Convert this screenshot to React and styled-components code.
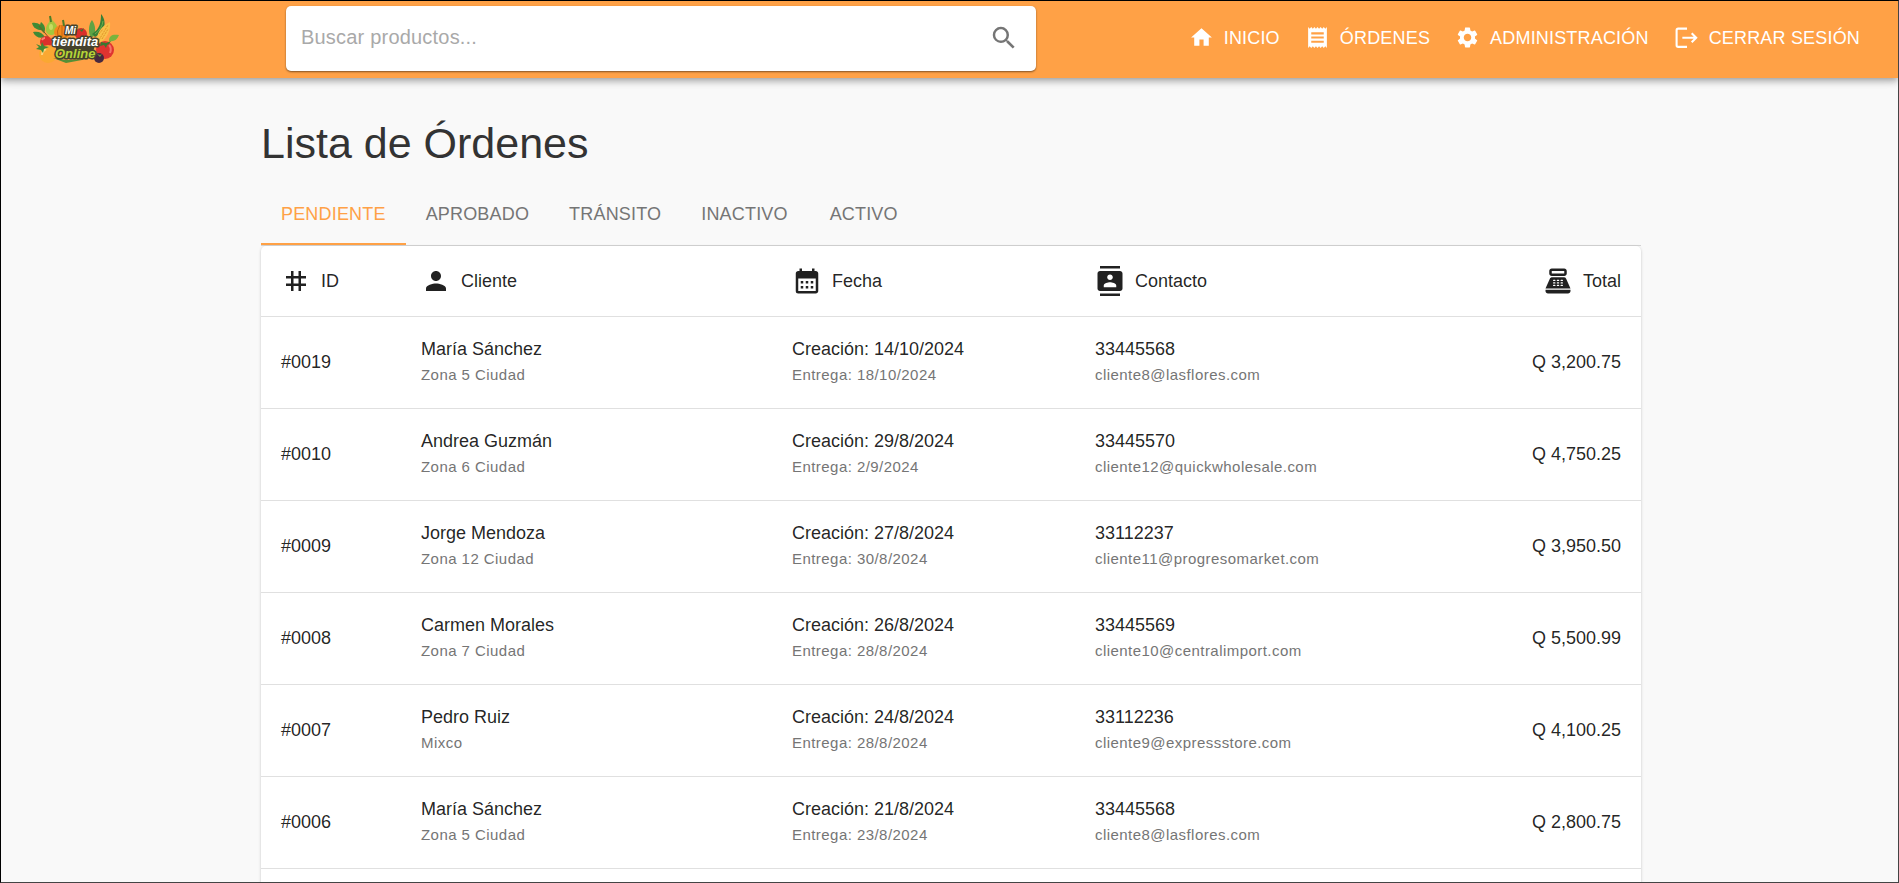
import React, { useState } from "react";
import styled, { createGlobalStyle } from "styled-components";
import {
  MdHome,
  MdReceipt,
  MdSettings,
  MdSearch,
  MdTag,
  MdPerson,
  MdCalendarMonth,
  MdContacts,
  MdPointOfSale,
} from "react-icons/md";

const GlobalStyle = createGlobalStyle`
  *, *::before, *::after { box-sizing: border-box; }
  body {
    margin: 0;
    background: #f9f9f9;
    color: rgba(0, 0, 0, 0.87);
    font-family: "Liberation Sans", Arial, Helvetica, sans-serif;
    font-size: 18px;
  }
  button, input { font: inherit; }
`;

const Page = styled.div`
  height: 100vh;
  overflow: hidden;
  border: 1px solid #000;
  border-right-color: #444;
  border-bottom-color: #444;
`;

const Header = styled.header`
  position: relative;
  display: flex;
  align-items: center;
  padding: 5px 38px 7px 30px;
  background: #ffa146;
  box-shadow: 0 2px 5px -1px rgba(0, 0, 0, 0.2), 0 5px 6px 0 rgba(0, 0, 0, 0.14),
    0 1px 12px 0 rgba(0, 0, 0, 0.12);
`;

const LogoLink = styled.a`
  display: block;
  flex: none;
  width: 88px;
  height: 50px;
  margin-right: 167px;
`;

const SearchForm = styled.form`
  display: flex;
  align-items: center;
  flex: 0 1 750px;
  height: 65px;
  padding: 0 17px 2px 15px;
  border-radius: 5px;
  background: #fff;
  box-shadow: 0 1px 2px rgba(0, 0, 0, 0.5);
`;

const SearchInput = styled.input`
  flex: 1;
  min-width: 0;
  padding: 0;
  border: 0;
  outline: 0;
  background: none;
  font-size: 20px;
  letter-spacing: 0.01em;
  color: rgba(0, 0, 0, 0.87);
  &::placeholder {
    color: #a9a9a9;
    opacity: 1;
  }
`;

const SearchButton = styled.button`
  display: flex;
  padding: 0;
  border: 0;
  background: none;
  color: #757575;
  cursor: pointer;
`;

const Nav = styled.nav`
  display: flex;
  gap: 25px;
  margin-left: auto;
  padding-bottom: 2px;
`;

const NavLink = styled.a`
  display: flex;
  align-items: center;
  gap: 10px;
  color: #fff;
  font-weight: 500;
  letter-spacing: 0.01em;
  line-height: 30px;
  text-decoration: none;
  text-transform: uppercase;
  white-space: nowrap;
`;

const Main = styled.main`
  padding-left: 3px;
`;

const Container = styled.div`
  max-width: 1380px;
  margin: 0 auto;
  padding-top: 39px;
`;

const Title = styled.h1`
  margin: 0 0 15px;
  color: #333;
  font-size: 43px;
  font-weight: 400;
  line-height: 53px;
`;

const Tabs = styled.div`
  display: flex;
  border-bottom: 1px solid #d4d4d4;
`;

const Tab = styled.button`
  min-width: 112px;
  height: 60px;
  padding: 0 20px 2px;
  border: 0;
  background: none;
  box-shadow: ${(p) => (p.$active ? "inset 0 -2px #ffa146" : "none")};
  color: ${(p) => (p.$active ? "#ffa146" : "#757575")};
  letter-spacing: 0.01em;
  text-transform: uppercase;
  cursor: pointer;
`;

const Card = styled.div`
  border-radius: 5px;
  background: #fff;
  box-shadow: 0 1px 3px rgba(0, 0, 0, 0.22);
`;

const Table = styled.table`
  width: 100%;
  table-layout: fixed;
  border-collapse: separate;
  border-spacing: 0;
`;

const Col = styled.col`
  width: ${(p) => p.$width || "auto"};
`;

const HeadCell = styled.th`
  padding: 20px;
  border-bottom: 1px solid #e0e0e0;
  font-weight: 400;
  text-align: left;
`;

const HeadLabel = styled.span`
  display: flex;
  align-items: center;
  justify-content: ${(p) => (p.$end ? "flex-end" : "flex-start")};
  gap: 10px;
  line-height: 30px;
`;

const Cell = styled.td`
  padding: 20px;
  border-bottom: 1px solid #e0e0e0;
  text-align: ${(p) => (p.$end ? "right" : "left")};
`;

const Primary = styled.div`
  line-height: 25px;
`;

const Secondary = styled.div`
  color: #757575;
  font-size: 15px;
  letter-spacing: 0.03em;
  line-height: 26px;
`;

const CardFooter = styled.div`
  height: 92px;
`;

const LogoutIcon = () => (
  <svg width="25" height="25" viewBox="0 0 24 24" fill="none" stroke="currentColor" strokeWidth="2" aria-hidden="true">
    <path d="M12.500 3.500H4Q2.500 3.500 2.500 5V19.500Q2.500 21 4 21H12.500M8 12.300H21M17 8l4.300 4.300L17 16.600" />
  </svg>
);

const LogoWord = styled.text`
  font-family: "Liberation Sans", Arial, sans-serif;
  font-weight: 700;
  font-style: italic;
  font-size: ${(p) => p.$size}px;
  fill: ${(p) => p.$fill};
  stroke: #45422c;
  stroke-width: 3px;
  stroke-linejoin: round;
  paint-order: stroke;
`;

const Logo = () => (
  <svg width="88" height="50" viewBox="0 0 88 50" role="img" aria-label="Mi tiendita Online">
    <g fill="#3f8a35">
      <path d="M1 9c6-1 10 2 12 7C7 17 2 14 1 9z" />
      <path d="M10 8c4 3 5 7 3 11-4-3-5-7-3-11z" />
      <path d="M2 18c5-1 9 0 12 5-5 2-10 0-12-5z" />
    </g>
    <path d="M8 12L19 25" stroke="#735a22" fill="none" />
    <path d="M20 3c1 5 7 6 6 12 0 4-3 6-6 6s-6-3-5-7 4-6 5-11z" fill="#a4c63c" />
    <path d="M19 2l1 6" stroke="#4f7c27" strokeWidth="2" />
    <ellipse cx="20" cy="13" rx="2" ry="3" fill="#c6dc62" />
    <ellipse cx="31" cy="18" rx="8" ry="7" fill="#f28a1c" />
    <path d="M29 11q-4 6-2 12M33 11q4 6 2 12M31 11v12" stroke="#c96411" fill="none" />
    <path d="M32 6l1 6" stroke="#4f7c27" strokeWidth="2" />
    <circle cx="50" cy="20" r="6" fill="#d92f2b" />
    <path d="M47 14l3 2 3-2-2 4z" fill="#3a7831" />
    <path d="M59 22c-2-6-1-12 2-16 4 6 4 12 1 17z" fill="#5ea344" />
    <path d="M61 20C69 15 70 8 70 0c6 7 5 18-6 23z" fill="#388137" />
    <path d="M64 20q7-5 8-13" stroke="#6db04a" fill="none" />
    <path d="M66 28c-1-8 4-16 13-20 1 8-3 16-9 20z" fill="#f9c04a" />
    <path d="M68 26L77 11M71 25l6-10M68 20l4-5" stroke="#df9427" strokeDasharray="2 1" />
    <path d="M78 27c0-6 4-7 10-6-2 5-5 7-10 6z" fill="#78b43d" />
    <circle cx="15" cy="28" r="6" fill="#db302c" />
    <path d="M11 26q1-2 3-2" stroke="#f58378" strokeWidth="2" fill="none" />
    <circle cx="17" cy="40" r="9" fill="#faa832" />
    <path d="M11 41q0-4 4-6" stroke="#ffd47c" strokeWidth="2" fill="none" />
    <path d="M5 30l5 2 1-4 2 4 5 1-5 2-1 4-2-3-5-1 3-2z" fill="#3f8a35" />
    <path d="M22 44l14 2 18-1 9-7 4 4-16 4-16 3z" fill="#568f36" />
    <circle cx="74" cy="36" r="9" fill="#df3430" />
    <path d="M78 31q3 3 1 8" stroke="#f47369" strokeWidth="2" fill="none" />
    <path d="M70 28l5 1 5-2-2 3-2 1-1 3-2-3-4 1z" fill="#3a7831" />
    <circle cx="68" cy="44" r="5" fill="#47283f" />
    <path d="M66 40l3 1 2-1-2 3z" fill="#6c993d" />
    <path d="M24 31h40l-2 7H26z" fill="#45422c" />
    <LogoWord x="34" y="20" $size={10} $fill="#fff">Mi</LogoWord>
    <LogoWord x="21" y="32" $size={13} $fill="#fff">tiendita</LogoWord>
    <LogoWord x="24" y="44" $size={13} $fill="#b4d438">Online</LogoWord>
  </svg>
);

const NAV = [
  { label: "Inicio", icon: MdHome },
  { label: "Órdenes", icon: MdReceipt },
  { label: "Administración", icon: MdSettings },
  { label: "Cerrar sesión", icon: LogoutIcon },
];

const TABS = ["Pendiente", "Aprobado", "Tránsito", "Inactivo", "Activo"];

const COLUMNS = [
  { label: "ID", icon: MdTag, width: "140px" },
  { label: "Cliente", icon: MdPerson, width: "371px" },
  { label: "Fecha", icon: MdCalendarMonth, width: "303px" },
  { label: "Contacto", icon: MdContacts },
  { label: "Total", icon: MdPointOfSale, end: true },
];

const ORDERS = [
  { id: "#0019", name: "María Sánchez", zone: "Zona 5 Ciudad", created: "14/10/2024", due: "18/10/2024", phone: "33445568", mail: "cliente8@lasflores.com", total: "Q 3,200.75" },
  { id: "#0010", name: "Andrea Guzmán", zone: "Zona 6 Ciudad", created: "29/8/2024", due: "2/9/2024", phone: "33445570", mail: "cliente12@quickwholesale.com", total: "Q 4,750.25" },
  { id: "#0009", name: "Jorge Mendoza", zone: "Zona 12 Ciudad", created: "27/8/2024", due: "30/8/2024", phone: "33112237", mail: "cliente11@progresomarket.com", total: "Q 3,950.50" },
  { id: "#0008", name: "Carmen Morales", zone: "Zona 7 Ciudad", created: "26/8/2024", due: "28/8/2024", phone: "33445569", mail: "cliente10@centralimport.com", total: "Q 5,500.99" },
  { id: "#0007", name: "Pedro Ruiz", zone: "Mixco", created: "24/8/2024", due: "28/8/2024", phone: "33112236", mail: "cliente9@expressstore.com", total: "Q 4,100.25" },
  { id: "#0006", name: "María Sánchez", zone: "Zona 5 Ciudad", created: "21/8/2024", due: "23/8/2024", phone: "33445568", mail: "cliente8@lasflores.com", total: "Q 2,800.75" },
];

export default function App() {
  const [tab, setTab] = useState(TABS[0]);
  return (
    <Page>
      <GlobalStyle />
      <Header>
        <LogoLink href="#inicio">
          <Logo />
        </LogoLink>
        <SearchForm role="search" onSubmit={(e) => e.preventDefault()}>
          <SearchInput type="text" aria-label="Buscar productos" placeholder="Buscar productos..." />
          <SearchButton type="submit" aria-label="Buscar">
            <MdSearch size={30} />
          </SearchButton>
        </SearchForm>
        <Nav>
          {NAV.map(({ label, icon: Icon }) => (
            <NavLink key={label} href="#">
              <Icon size={25} />
              {label}
            </NavLink>
          ))}
        </Nav>
      </Header>
      <Main>
        <Container>
          <Title>Lista de Órdenes</Title>
          <Tabs role="tablist">
            {TABS.map((name) => (
              <Tab key={name} type="button" role="tab" aria-selected={name === tab} $active={name === tab} onClick={() => setTab(name)}>
                {name}
              </Tab>
            ))}
          </Tabs>
          <Card>
            <Table>
              <colgroup>
                {COLUMNS.map((c) => (
                  <Col key={c.label} $width={c.width} />
                ))}
              </colgroup>
              <thead>
                <tr>
                  {COLUMNS.map(({ label, icon: Icon, end }) => (
                    <HeadCell key={label} scope="col">
                      <HeadLabel $end={end}>
                        <Icon size={30} />
                        {label}
                      </HeadLabel>
                    </HeadCell>
                  ))}
                </tr>
              </thead>
              <tbody>
                {ORDERS.map((o) => (
                  <tr key={o.id}>
                    <Cell>{o.id}</Cell>
                    <Cell>
                      <Primary>{o.name}</Primary>
                      <Secondary>{o.zone}</Secondary>
                    </Cell>
                    <Cell>
                      <Primary>Creación: {o.created}</Primary>
                      <Secondary>Entrega: {o.due}</Secondary>
                    </Cell>
                    <Cell>
                      <Primary>{o.phone}</Primary>
                      <Secondary>{o.mail}</Secondary>
                    </Cell>
                    <Cell $end>{o.total}</Cell>
                  </tr>
                ))}
              </tbody>
            </Table>
            <CardFooter />
          </Card>
        </Container>
      </Main>
    </Page>
  );
}
